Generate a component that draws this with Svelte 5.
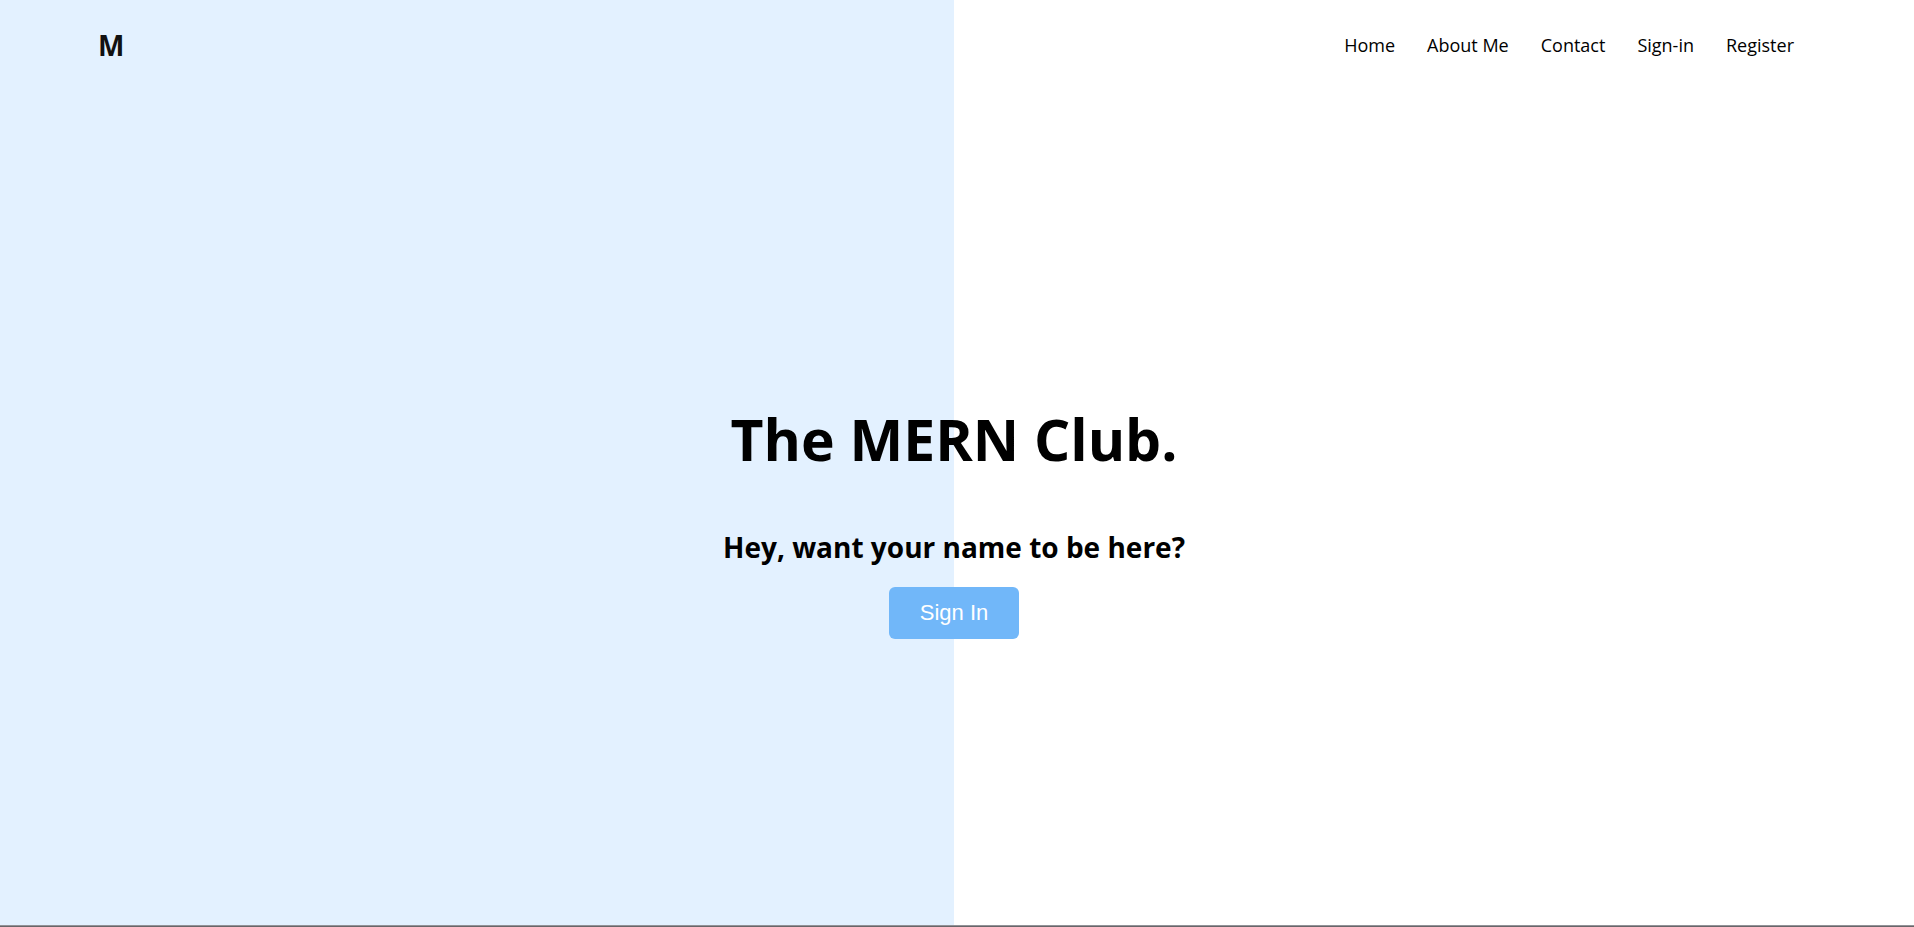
<script>
  const links = ['Home', 'About Me', 'Contact', 'Sign-in', 'Register'];
</script>

<div class="page">
  <header>
    <a class="logo" href="#home">M</a>
    <nav aria-label="Main">
      {#each links as link}
        <a href={'#' + link.toLowerCase().replace(' ', '-')}>{link}</a>
      {/each}
    </nav>
  </header>
  <main>
    <h1>The MERN Club.</h1>
    <h2>Hey, want your name to be here?</h2>
    <button type="button">Sign In</button>
  </main>
  <footer></footer>
</div>

<style>
  :global(body) {
    margin: 0;
    background: #fff;
  }

  .page {
    display: flex;
    flex-direction: column;
    box-sizing: border-box;
    min-height: 100vh;
    padding-right: 6px;
    background: linear-gradient(90deg, #e3f1ff 50%, #fff 50%) content-box;
    color: #000;
    font-family: 'Open Sans', 'Noto Sans', sans-serif;
  }

  header {
    display: flex;
    align-items: center;
    justify-content: space-between;
    height: 90px;
    padding: 0 114px 0 98px;
  }

  a {
    color: inherit;
    text-decoration: none;
  }

  .logo {
    color: #111;
    font-size: 28px;
    font-weight: 700;
  }

  nav {
    display: flex;
    gap: 32px;
    font-size: 18px;
  }

  main {
    flex: 1;
    display: flex;
    flex-direction: column;
    align-items: center;
    justify-content: center;
    padding-top: 26px;
    text-align: center;
  }

  h1 {
    margin: 0 0 54px;
    font-size: 57px;
    font-weight: 700;
    line-height: 72px;
  }

  h2 {
    margin: 0 0 22px;
    font-size: 28px;
    font-weight: 700;
    line-height: 36px;
  }

  button {
    height: 52px;
    padding: 0 31px;
    border: 0;
    border-radius: 6px;
    background: #71b7f9;
    color: #fff;
    font-family: 'Liberation Sans', Arial, sans-serif;
    font-size: 22px;
    cursor: pointer;
  }

  footer {
    height: 1px;
    margin-right: -6px;
    border-top: 1px solid #929297;
    background: #686669;
  }
</style>
